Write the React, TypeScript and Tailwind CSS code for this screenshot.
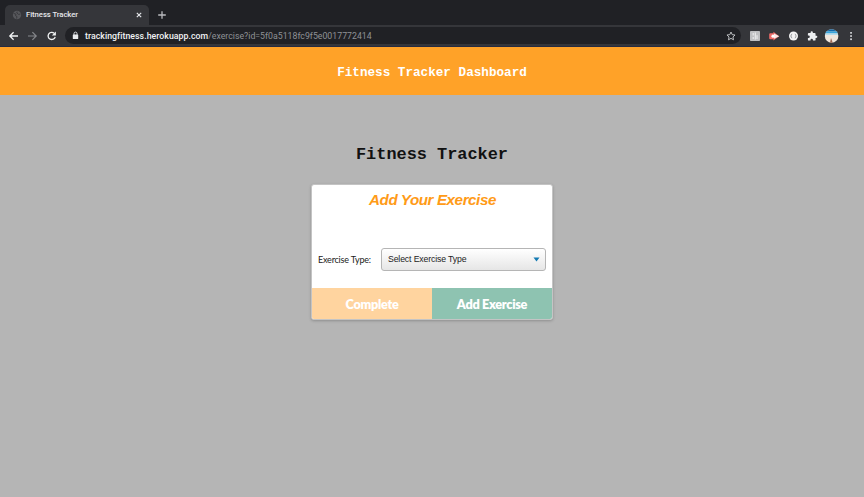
import React from "react";

function Globe() {
  return (
    <svg width="10" height="10" viewBox="0 0 10 10" className="shrink-0">
      <circle cx="5" cy="5" r="4.2" fill="#56575b" />
      <path d="M1.5 3.4 4 4.2 3.5 5.6 5 6.6 4.6 8.6M5.2 1.6 4.8 3 6.6 4.4 8.4 4" fill="none" stroke="#35363a" strokeWidth="0.9" />
    </svg>
  );
}

function Tabs() {
  return (
    <div className="flex h-[25px] items-end bg-[#202125] pl-[5px]">
      <div className="flex h-[20px] w-[144px] items-center rounded-t-[5px] bg-[#35363a] pl-[7px] pr-[6px]">
        <Globe />
        <span className="ml-[4px] flex-1 whitespace-nowrap font-[Roboto,sans-serif] text-[7.7px] leading-[20px] font-medium tracking-[-0.05px] text-[#e6e7ea]">
          Fitness Tracker
        </span>
        <svg width="8" height="8" viewBox="0 0 8 8">
          <path d="M1.8 1.8 6.2 6.2M6.2 1.8 1.8 6.2" stroke="#e8eaed" strokeWidth="1.1" />
        </svg>
      </div>
      <svg width="10" height="20" viewBox="0 0 10 20" className="ml-[8px]">
        <path d="M5 6.2V13.8M1.2 10H8.8" stroke="#b9bbbe" strokeWidth="1.3" />
      </svg>
    </div>
  );
}

function Toolbar() {
  return (
    <div className="flex h-[22px] items-center border-b border-[#252b42] bg-[#35363a] pl-[8px]">
      <svg width="50" height="12" viewBox="0 0 50 12" className="shrink-0" fill="none">
        <path d="M10 6H1.8M5.6 2.2 1.8 6l3.8 3.8" stroke="#f1f3f4" strokeWidth="1.3" />
        <path d="M20 6h8.2M24.4 2.2 28.2 6l-3.8 3.8" stroke="#85878b" strokeWidth="1.2" />
        <path d="M46.3 3.4A3.6 3.6 0 1 0 47.2 6.8" stroke="#f1f3f4" strokeWidth="1.3" />
        <path d="M47.9 1.6V5.6H43.9Z" fill="#f1f3f4" />
      </svg>
      <div className="ml-[7px] flex h-[17px] w-[676px] items-center rounded-full bg-[#202125] pl-[7px] pr-[5px]">
        <svg width="7" height="9" viewBox="0 0 7 9" className="shrink-0">
          <path d="M2 4V2.6a1.5 1.5 0 0 1 3 0V4" fill="none" stroke="#e8eaed" strokeWidth="0.9" />
          <rect x="0.8" y="3.5" width="5.4" height="4.6" rx="0.6" fill="#e8eaed" />
        </svg>
        <span className="ml-[6px] flex-1 whitespace-nowrap pt-[2px] font-[Roboto,sans-serif] text-[8.75px] leading-[15px] text-[#8f9195]">
          <span className="font-medium tracking-[0.04px] text-[#f1f3f4]">trackingfitness.herokuapp.com</span>
          <span>/exercise?id=5f0a5118fc9f5e0017772414</span>
        </span>
        <svg width="10" height="10" viewBox="0 0 24 24" fill="none" stroke="#c8cacd" strokeWidth="2.2">
          <path d="m12 2.5 2.9 6.3 6.8.8-5 4.7 1.3 6.8L12 17.7l-6 3.4 1.3-6.8-5-4.7 6.8-.8z" />
        </svg>
      </div>
      <svg width="123" height="18" viewBox="741 27 123 18" className="shrink-0">
        <rect x="750" y="31" width="10" height="10" rx="0.8" fill="#bfc0c2" />
        <path d="M753.2 33v2.6M755.3 32.6v6.8M757 35.2v3.8M753.2 37v2" stroke="#ededee" strokeWidth="1.1" fill="none" />
        <path d="M770.2 33.2h3.2v-1.4l5.8 4.4-5.8 4.4v-1.4h-3.2q-1 0-1-1v-4q0-1 1-1z" fill="#ee6b68" />
        <path d="M774 33.6 779.2 36.2 774 38.8Z" fill="#f8eae8" />
        <circle cx="773" cy="36.2" r="1.6" fill="#fff" />
        <circle cx="793.5" cy="36" r="4.5" fill="#f4f4f4" />
        <path d="M792.2 34q-.9 0-.9 1 0 1-.6 1 .6 0 .6 1 0 1 .9 1M794.8 34q.9 0 .9 1 0 1 .6 1-.6 0-.6 1 0 1-.9 1" fill="none" stroke="#777a7e" strokeWidth="0.7" />
        <path transform="translate(807 30.7) scale(.45)" fill="#eceef0" d="M20.5 11H19V7a2 2 0 0 0-2-2h-4V3.5a2.5 2.5 0 0 0-5 0V5H4a2 2 0 0 0-2 2v3.8h1.5a2.7 2.7 0 0 1 0 5.4H2V20a2 2 0 0 0 2 2h3.8v-1.5a2.7 2.7 0 0 1 5.4 0V22H17a2 2 0 0 0 2-2v-4h1.5a2.5 2.5 0 0 0 0-5z" />
        <clipPath id="avatar">
          <circle cx="831.6" cy="36" r="6.8" />
        </clipPath>
        <g clipPath="url(#avatar)">
          <rect x="824" y="29" width="16" height="15" fill="#f1e6dc" />
          <rect x="824" y="29" width="16" height="2.5" fill="#1268a8" />
          <rect x="824" y="31.5" width="16" height="2" fill="#38a5dc" />
          <rect x="824" y="33.5" width="16" height="1.5" fill="#b7dcec" />
          <path d="M831 38 829.7 44h3.5z" fill="#9b6550" />
        </g>
        <g fill="#d8dadd">
          <rect x="850.2" y="32" width="1.7" height="1.7" />
          <rect x="850.2" y="35.2" width="1.7" height="1.7" />
          <rect x="850.2" y="38.4" width="1.7" height="1.7" />
        </g>
      </svg>
    </div>
  );
}

function ExerciseCard() {
  return (
    <section className="mt-[19px] flex h-[136px] w-[242px] flex-col overflow-hidden rounded-[3px] border border-[#c4c4c4] bg-white shadow-[0_1px_3px_rgba(0,0,0,0.22)]">
      <h2 className="h-[62px] pl-px text-center font-['Liberation_Sans',sans-serif] text-[15.2px] leading-[30px] font-bold tracking-[-0.43px] text-[#ff9b17] italic">
        Add Your Exercise
      </h2>
      <div className="flex h-[24px] items-center px-[6px]">
        <label className="w-[63px] whitespace-nowrap pt-[2px] font-[Lato,sans-serif] text-[9px] tracking-[-0.2px] text-[#222]">Exercise Type:</label>
        <button className="flex h-[23px] flex-1 items-center justify-between rounded-[3px] border border-[#b5b5b5] bg-linear-to-b from-white to-[#e6e6e6] pr-[5px] pl-[6px] font-['Liberation_Sans',sans-serif] text-[8.7px] tracking-[-0.13px] text-[#222]">
          <span className="pt-px">Select Exercise Type</span>
          <svg width="7" height="5" viewBox="0 0 7 5">
            <path d="M.5.5h6L3.5 4.5Z" fill="#147bb3" />
          </svg>
        </button>
      </div>
      <div className="mt-auto flex h-[31px] font-[Lato,sans-serif] text-[12.7px] font-extrabold tracking-[-0.3px] text-white">
        <button className="flex-1 bg-[#ffd49f] pt-[2px]">Complete</button>
        <button className="flex-1 bg-[#8ec3b1] pt-[2px]">Add Exercise</button>
      </div>
    </section>
  );
}

export default function App() {
  return (
    <div className="flex h-[497px] w-[864px] flex-col overflow-hidden bg-[#b5b5b5]">
      <Tabs />
      <Toolbar />
      <header className="flex h-[48px] items-center justify-center bg-[#ffa228] font-['Courier_New','Liberation_Mono',monospace] text-[12.65px] font-bold text-white">
        <span className="pt-[5px]">Fitness Tracker Dashboard</span>
      </header>
      <main className="flex flex-1 flex-col items-center pt-[50px]">
        <h1 className="h-[20px] font-['Courier_New','Liberation_Mono',monospace] text-[16.9px] leading-[20px] font-bold text-[#111]">Fitness Tracker</h1>
        <ExerciseCard />
      </main>
    </div>
  );
}
